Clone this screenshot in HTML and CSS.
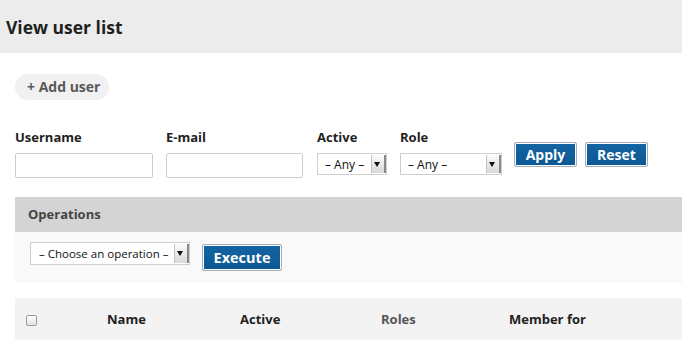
FILE: index.html
```html
<!DOCTYPE html>
<html lang="en">
<head>
<meta charset="utf-8">
<title>View user list</title>
<link rel="stylesheet" href="styles.css">
</head>
<body>
<header class="page-head">
  <h1 class="page-title">View user list</h1>
</header>
<main class="content">
  <div class="action-links">
    <a class="action-link" href="#">+ Add user</a>
  </div>
  <form class="filters">
    <div class="field field-name">
      <label class="field-label">Username</label>
      <input class="text-input" type="text">
    </div>
    <div class="field field-mail">
      <label class="field-label">E-mail</label>
      <input class="text-input" type="text">
    </div>
    <div class="field field-active">
      <label class="field-label">Active</label>
      <div class="select select-active"><span class="select-text">– Any –</span><span class="select-arrow"></span></div>
    </div>
    <div class="field field-role">
      <label class="field-label">Role</label>
      <div class="select select-role"><span class="select-text">– Any –</span><span class="select-arrow"></span></div>
    </div>
    <div class="filter-actions">
      <button class="btn btn-apply" type="button">Apply</button>
      <button class="btn btn-reset" type="button">Reset</button>
    </div>
  </form>
  <section class="ops">
    <div class="ops-title">Operations</div>
    <div class="ops-body">
      <div class="select select-op"><span class="select-text">– Choose an operation –</span><span class="select-arrow"></span></div>
      <button class="btn btn-exec" type="button">Execute</button>
    </div>
  </section>
  <div class="table-head">
    <div class="th th-check"><span class="checkbox"></span></div>
    <div class="th th-name">Name</div>
    <div class="th th-active">Active</div>
    <div class="th th-roles">Roles</div>
    <div class="th th-member">Member for</div>
  </div>
</main>
</body>
</html>
```

FILE: styles.css
```css
* { box-sizing: border-box; }
html, body { margin: 0; padding: 0; background: #fff; }
body {
  font-family: "Open Sans", "DejaVu Sans", sans-serif;
  color: #222;
  width: 682px;
  overflow: hidden;
}
.page-head {
  background: #ececec;
  height: 53px;
  padding: 15px 0 0 6px;
}
.page-title {
  margin: 0;
  font-size: 17.5px;
  font-weight: 700;
  line-height: 24px;
  color: #1f1f1f;
}
.content {
  padding: 21px 0 0 15px;
}
.action-links { display: flex; }
.action-link {
  display: inline-block;
  height: 26px;
  line-height: 26px;
  padding: 0 9px 0 12px;
  border-radius: 13px;
  background: #f1f1f1;
  color: #595959;
  font-weight: 700;
  font-size: 14px;
  text-decoration: none;
}
.filters {
  display: flex;
  align-items: flex-start;
  margin-top: 27px;
}
.field { display: flex; flex-direction: column; }
.field-label {
  font-size: 13px;
  font-weight: 700;
  line-height: 20px;
  color: #222;
  height: 26px;
}
.field-name { width: 151px; }
.field-mail { width: 151px; }
.field-active { width: 83px; }
.field-role { width: 114px; }
.text-input {
  width: 138px;
  height: 25px;
  border: 1px solid #ccc;
  border-radius: 2px;
  margin: 0;
  padding: 0 4px;
  background: #fff;
}
.field-mail .text-input { width: 137px; }
.select {
  display: flex;
  align-items: stretch;
  height: 22px;
  border: 1px solid #cfcfcf;
  background: #fff;
  font-size: 12px;
  color: #111;
}
.select-text {
  flex: 1;
  line-height: 21px;
  padding-left: 7px;
  white-space: nowrap;
  overflow: hidden;
}
.select-arrow {
  position: relative;
  flex: none;
  width: 15px;
  margin: 1px 0;
  background: linear-gradient(#fbfbfb, #d8d8d8);
  border-left: 1px solid #c4c4c4;
  border-right: 2px solid #8a8a8a;
}
.select-arrow::after {
  content: "";
  position: absolute;
  left: 2px;
  top: 7px;
  border-left: 3.5px solid transparent;
  border-right: 3.5px solid transparent;
  border-top: 5px solid #111;
}
.select-active { width: 70px; }
.select-role { width: 102px; }
.filter-actions {
  display: flex;
  gap: 8px;
  margin-top: 15px;
}
.btn {
  height: 25px;
  width: 63px;
  margin: 0;
  padding: 0;
  border: 1px solid #a3afba;
  border-radius: 2px;
  background: linear-gradient(#1565a3, #0a5793);
  box-shadow: inset 0 0 0 1px #fff;
  color: #fff;
  font-family: "Open Sans", "DejaVu Sans", sans-serif;
  font-weight: 700;
  font-size: 14px;
  line-height: 20px;
}
.ops {
  margin-top: 19px;
}
.ops-title {
  background: #d4d4d4;
  height: 35px;
  line-height: 35px;
  padding-left: 13px;
  font-size: 13px;
  font-weight: 700;
  color: #444;
}
.ops-body {
  background: #f9f9f9;
  height: 51px;
  display: flex;
  align-items: flex-start;
  padding: 10px 0 0 15px;
  gap: 12px;
}
.select-op { width: 160px; height: 23px; }
.select-op .select-text { padding-left: 8px; font-size: 11.5px; }
.btn-exec {
  width: 80px;
  height: 27px;
  margin-top: 2px;
  font-size: 14.5px;
}
.table-head {
  margin-top: 15px;
  height: 42px;
  background: #f3f3f3;
  display: grid;
  grid-template-columns: 92px 133px 141px 128px 1fr;
  align-items: center;
  font-size: 13px;
  font-weight: 700;
  color: #222;
}
.th-check { padding-left: 11px; display: flex; align-items: center; }
.th-roles { color: #555; }
.checkbox {
  display: inline-block;
  width: 11px;
  height: 11px;
  border: 1px solid #9a9a9a;
  border-radius: 2px;
  background: linear-gradient(#fff, #e4e4e4);
  margin-top: 2px;
}
```
